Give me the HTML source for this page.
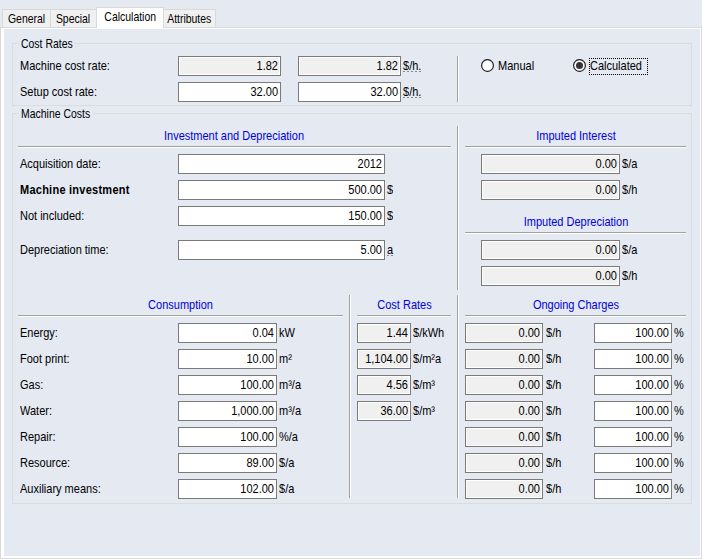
<!DOCTYPE html>
<html><head><meta charset="utf-8">
<style>
html,body{margin:0;padding:0;}
body{width:702px;height:559px;position:relative;overflow:hidden;background:#e4e9f2;font:11px "Liberation Sans",sans-serif;color:#000;}
div{position:absolute;box-sizing:border-box;}
.tab{top:9px;height:18px;border:1px solid #d9d9d9;border-bottom:none;background:#f0f0f0;line-height:19px;text-align:center;}
.tab.sel{top:7px;height:21px;background:#fff;border-color:#d9d9d9;line-height:19px;}
.page{left:0;top:27px;width:702px;height:532px;border:1px solid #d9d9d9;background:#fff;}
.inner{left:4px;top:29px;width:696px;height:527px;background:#e4e9f2;}
.grp{border:1px solid #dcdcdc;}
.gt{line-height:13px;height:13px;padding:0 0 0 2px;overflow:hidden;background:#e4e9f2;white-space:nowrap;}
.l{left:20px;height:20px;line-height:20px;white-space:nowrap;}
.tb{height:20px;border:1px solid #7a7a7a;background:#fff;text-align:right;line-height:18px;padding-right:2px;white-space:nowrap;}
.ro{background:#f0f0f0;box-shadow:inset 0 0 0 1px #fff;}
.u{height:20px;line-height:20px;white-space:nowrap;}
.hs{height:2px;border-top:1px solid #a0a0a0;border-bottom:1px solid #fff;}
.vs{width:2px;border-left:1px solid #a0a0a0;border-right:1px solid #fff;}
.h{color:#0000e0;height:14px;line-height:14px;text-align:center;white-space:nowrap;}
.dot{width:18px;height:1px;background:repeating-linear-gradient(90deg,#8a8a8a 0 2px,transparent 2px 4px);}
.t{display:inline-block;transform:scaleY(1.125);transform-origin:50% 70%;}
.tab .t{transform:scale(0.95,1.125);}
.d{display:inline-block;line-height:11px;clip-path:inset(1px 0 2px 0);}
.gt .t{transform:scale(0.95,1.125);transform-origin:0 70%;}
</style></head><body>
<!-- tabs -->
<div class="page"></div>
<div class="tab" style="left:2px;width:49px;"><span class="t">General</span></div>
<div class="tab" style="left:50px;width:47px;"><span class="t">Special</span></div>
<div class="tab sel" style="left:96px;width:68px;"><span class="t">Calculation</span></div>
<div class="tab" style="left:163px;width:53px;"><span class="t">Attributes</span></div>
<div class="inner"></div>

<!-- Cost Rates group -->
<div class="grp" style="left:12px;top:43px;width:680px;height:63px;"></div>
<div class="gt" style="left:19px;top:38px;width:56px;"><span class="t">Cost Rates</span></div>
<div class="l" style="top:56px;"><span class="t">Machine cost rate:</span></div>
<div class="l" style="top:82px;"><span class="t">Setup cost rate:</span></div>
<div class="tb ro" style="left:178px;top:56px;width:103px;"><span class="t">1.82</span></div>
<div class="tb" style="left:178px;top:82px;width:103px;"><span class="t">32.00</span></div>
<div class="tb ro" style="left:298px;top:56px;width:103px;"><span class="t">1.82</span></div>
<div class="tb" style="left:298px;top:82px;width:103px;"><span class="t">32.00</span></div>
<div class="u" style="left:403px;top:56px;"><span class="t"><span class="d">$</span>/h.</span></div>
<div class="u" style="left:403px;top:82px;"><span class="t"><span class="d">$</span>/h.</span></div>
<div class="dot" style="left:403px;top:71px;"></div>
<div class="dot" style="left:403px;top:97px;"></div>
<div class="dot" style="left:387px;top:255px;width:8px;"></div>
<div class="vs" style="left:457px;top:56px;height:46px;"></div>

<!-- Machine Costs group -->
<div class="grp" style="left:12px;top:113px;width:680px;height:391px;"></div>
<div class="gt" style="left:19px;top:108px;width:74px;"><span class="t">Machine Costs</span></div>


<!-- Investment -->
<div class="h" style="left:18px;top:129px;width:432px;"><span class="t">Investment and Depreciation</span></div>
<div class="hs" style="left:18px;top:146px;width:433px;"></div>
<div class="l" style="top:154px;"><span class="t">Acquisition date:</span></div>
<div class="l" style="top:180px;font-weight:bold;letter-spacing:0.25px;"><span class="t">Machine investment</span></div>
<div class="l" style="top:206px;"><span class="t">Not included:</span></div>
<div class="l" style="top:240px;"><span class="t">Depreciation time:</span></div>
<div class="tb" style="left:178px;top:154px;width:207px;"><span class="t">2012</span></div>
<div class="tb" style="left:178px;top:180px;width:207px;"><span class="t">500.00</span></div>
<div class="tb" style="left:178px;top:206px;width:207px;"><span class="t">150.00</span></div>
<div class="tb" style="left:178px;top:240px;width:207px;"><span class="t">5.00</span></div>
<div class="u" style="left:387px;top:180px;"><span class="t"><span class="d">$</span></span></div>
<div class="u" style="left:387px;top:206px;"><span class="t"><span class="d">$</span></span></div>
<div class="u" style="left:387px;top:240px;"><span class="t">a</span></div>
<div class="vs" style="left:457px;top:126px;height:164px;"></div>

<!-- Imputed -->
<div class="h" style="left:465px;top:129px;width:222px;"><span class="t">Imputed Interest</span></div>
<div class="hs" style="left:465px;top:146px;width:221px;"></div>
<div class="tb ro" style="left:481px;top:154px;width:139px;"><span class="t">0.00</span></div>
<div class="tb ro" style="left:481px;top:180px;width:139px;"><span class="t">0.00</span></div>
<div class="u" style="left:622px;top:154px;"><span class="t"><span class="d">$</span>/a</span></div>
<div class="u" style="left:622px;top:180px;"><span class="t"><span class="d">$</span>/h</span></div>
<div class="h" style="left:465px;top:215px;width:222px;"><span class="t">Imputed Depreciation</span></div>
<div class="hs" style="left:465px;top:232px;width:221px;"></div>
<div class="tb ro" style="left:481px;top:240px;width:139px;"><span class="t">0.00</span></div>
<div class="tb ro" style="left:481px;top:266px;width:139px;"><span class="t">0.00</span></div>
<div class="u" style="left:622px;top:240px;"><span class="t"><span class="d">$</span>/a</span></div>
<div class="u" style="left:622px;top:266px;"><span class="t"><span class="d">$</span>/h</span></div>

<!-- Consumption -->
<div class="h" style="left:18px;top:298px;width:325px;"><span class="t">Consumption</span></div>
<div class="hs" style="left:18px;top:315px;width:325px;"></div>
<div class="vs" style="left:349px;top:295px;height:203px;"></div>
<div class="h" style="left:357px;top:298px;width:95px;"><span class="t">Cost Rates</span></div>
<div class="hs" style="left:357px;top:315px;width:94px;"></div>
<div class="vs" style="left:457px;top:295px;height:203px;"></div>
<div class="h" style="left:465px;top:298px;width:222px;"><span class="t">Ongoing Charges</span></div>
<div class="hs" style="left:465px;top:315px;width:221px;"></div>
<div class="l" style="top:323px;"><span class="t">Energy:</span></div>
<div class="tb" style="left:178px;top:323px;width:99px;"><span class="t">0.04</span></div>
<div class="u" style="left:279px;top:323px;"><span class="t">kW</span></div>
<div class="tb ro" style="left:357px;top:323px;width:54px;"><span class="t">1.44</span></div>
<div class="u" style="left:413px;top:323px;"><span class="t"><span class="d">$</span>/kWh</span></div>
<div class="tb ro" style="left:465px;top:323px;width:78px;"><span class="t">0.00</span></div>
<div class="u" style="left:546px;top:323px;"><span class="t"><span class="d">$</span>/h</span></div>
<div class="tb" style="left:594px;top:323px;width:78px;"><span class="t">100.00</span></div>
<div class="u" style="left:674px;top:323px;"><span class="t">%</span></div>
<div class="l" style="top:349px;"><span class="t">Foot print:</span></div>
<div class="tb" style="left:178px;top:349px;width:99px;"><span class="t">10.00</span></div>
<div class="u" style="left:279px;top:349px;"><span class="t">m²</span></div>
<div class="tb ro" style="left:357px;top:349px;width:54px;"><span class="t">1,104.00</span></div>
<div class="u" style="left:413px;top:349px;"><span class="t"><span class="d">$</span>/m²a</span></div>
<div class="tb ro" style="left:465px;top:349px;width:78px;"><span class="t">0.00</span></div>
<div class="u" style="left:546px;top:349px;"><span class="t"><span class="d">$</span>/h</span></div>
<div class="tb" style="left:594px;top:349px;width:78px;"><span class="t">100.00</span></div>
<div class="u" style="left:674px;top:349px;"><span class="t">%</span></div>
<div class="l" style="top:375px;"><span class="t">Gas:</span></div>
<div class="tb" style="left:178px;top:375px;width:99px;"><span class="t">100.00</span></div>
<div class="u" style="left:279px;top:375px;"><span class="t">m³/a</span></div>
<div class="tb ro" style="left:357px;top:375px;width:54px;"><span class="t">4.56</span></div>
<div class="u" style="left:413px;top:375px;"><span class="t"><span class="d">$</span>/m³</span></div>
<div class="tb ro" style="left:465px;top:375px;width:78px;"><span class="t">0.00</span></div>
<div class="u" style="left:546px;top:375px;"><span class="t"><span class="d">$</span>/h</span></div>
<div class="tb" style="left:594px;top:375px;width:78px;"><span class="t">100.00</span></div>
<div class="u" style="left:674px;top:375px;"><span class="t">%</span></div>
<div class="l" style="top:401px;"><span class="t">Water:</span></div>
<div class="tb" style="left:178px;top:401px;width:99px;"><span class="t">1,000.00</span></div>
<div class="u" style="left:279px;top:401px;"><span class="t">m³/a</span></div>
<div class="tb ro" style="left:357px;top:401px;width:54px;"><span class="t">36.00</span></div>
<div class="u" style="left:413px;top:401px;"><span class="t"><span class="d">$</span>/m³</span></div>
<div class="tb ro" style="left:465px;top:401px;width:78px;"><span class="t">0.00</span></div>
<div class="u" style="left:546px;top:401px;"><span class="t"><span class="d">$</span>/h</span></div>
<div class="tb" style="left:594px;top:401px;width:78px;"><span class="t">100.00</span></div>
<div class="u" style="left:674px;top:401px;"><span class="t">%</span></div>
<div class="l" style="top:427px;"><span class="t">Repair:</span></div>
<div class="tb" style="left:178px;top:427px;width:99px;"><span class="t">100.00</span></div>
<div class="u" style="left:279px;top:427px;"><span class="t">%/a</span></div>
<div class="tb ro" style="left:465px;top:427px;width:78px;"><span class="t">0.00</span></div>
<div class="u" style="left:546px;top:427px;"><span class="t"><span class="d">$</span>/h</span></div>
<div class="tb" style="left:594px;top:427px;width:78px;"><span class="t">100.00</span></div>
<div class="u" style="left:674px;top:427px;"><span class="t">%</span></div>
<div class="l" style="top:453px;"><span class="t">Resource:</span></div>
<div class="tb" style="left:178px;top:453px;width:99px;"><span class="t">89.00</span></div>
<div class="u" style="left:279px;top:453px;"><span class="t"><span class="d">$</span>/a</span></div>
<div class="tb ro" style="left:465px;top:453px;width:78px;"><span class="t">0.00</span></div>
<div class="u" style="left:546px;top:453px;"><span class="t"><span class="d">$</span>/h</span></div>
<div class="tb" style="left:594px;top:453px;width:78px;"><span class="t">100.00</span></div>
<div class="u" style="left:674px;top:453px;"><span class="t">%</span></div>
<div class="l" style="top:479px;"><span class="t">Auxiliary means:</span></div>
<div class="tb" style="left:178px;top:479px;width:99px;"><span class="t">102.00</span></div>
<div class="u" style="left:279px;top:479px;"><span class="t"><span class="d">$</span>/a</span></div>
<div class="tb ro" style="left:465px;top:479px;width:78px;"><span class="t">0.00</span></div>
<div class="u" style="left:546px;top:479px;"><span class="t"><span class="d">$</span>/h</span></div>
<div class="tb" style="left:594px;top:479px;width:78px;"><span class="t">100.00</span></div>
<div class="u" style="left:674px;top:479px;"><span class="t">%</span></div>

<!-- radios -->
<svg style="position:absolute;left:481px;top:59px;" width="13" height="13"><circle cx="6.5" cy="6.5" r="5.9" fill="#fff" stroke="#2a2a2a" stroke-width="1.25"/></svg>
<div class="u" style="left:498px;top:56px;"><span class="t">Manual</span></div>
<svg style="position:absolute;left:573px;top:59px;" width="13" height="13"><circle cx="6.5" cy="6.5" r="5.9" fill="#fff" stroke="#2a2a2a" stroke-width="1.25"/><circle cx="6.5" cy="6.5" r="3.5" fill="#333"/></svg>
<div class="u" style="left:590px;top:56px;"><span class="t">Calculated</span></div>
<div style="left:589px;top:58px;width:59px;height:17px;border:1px dotted #000;"></div>
</body></html>
